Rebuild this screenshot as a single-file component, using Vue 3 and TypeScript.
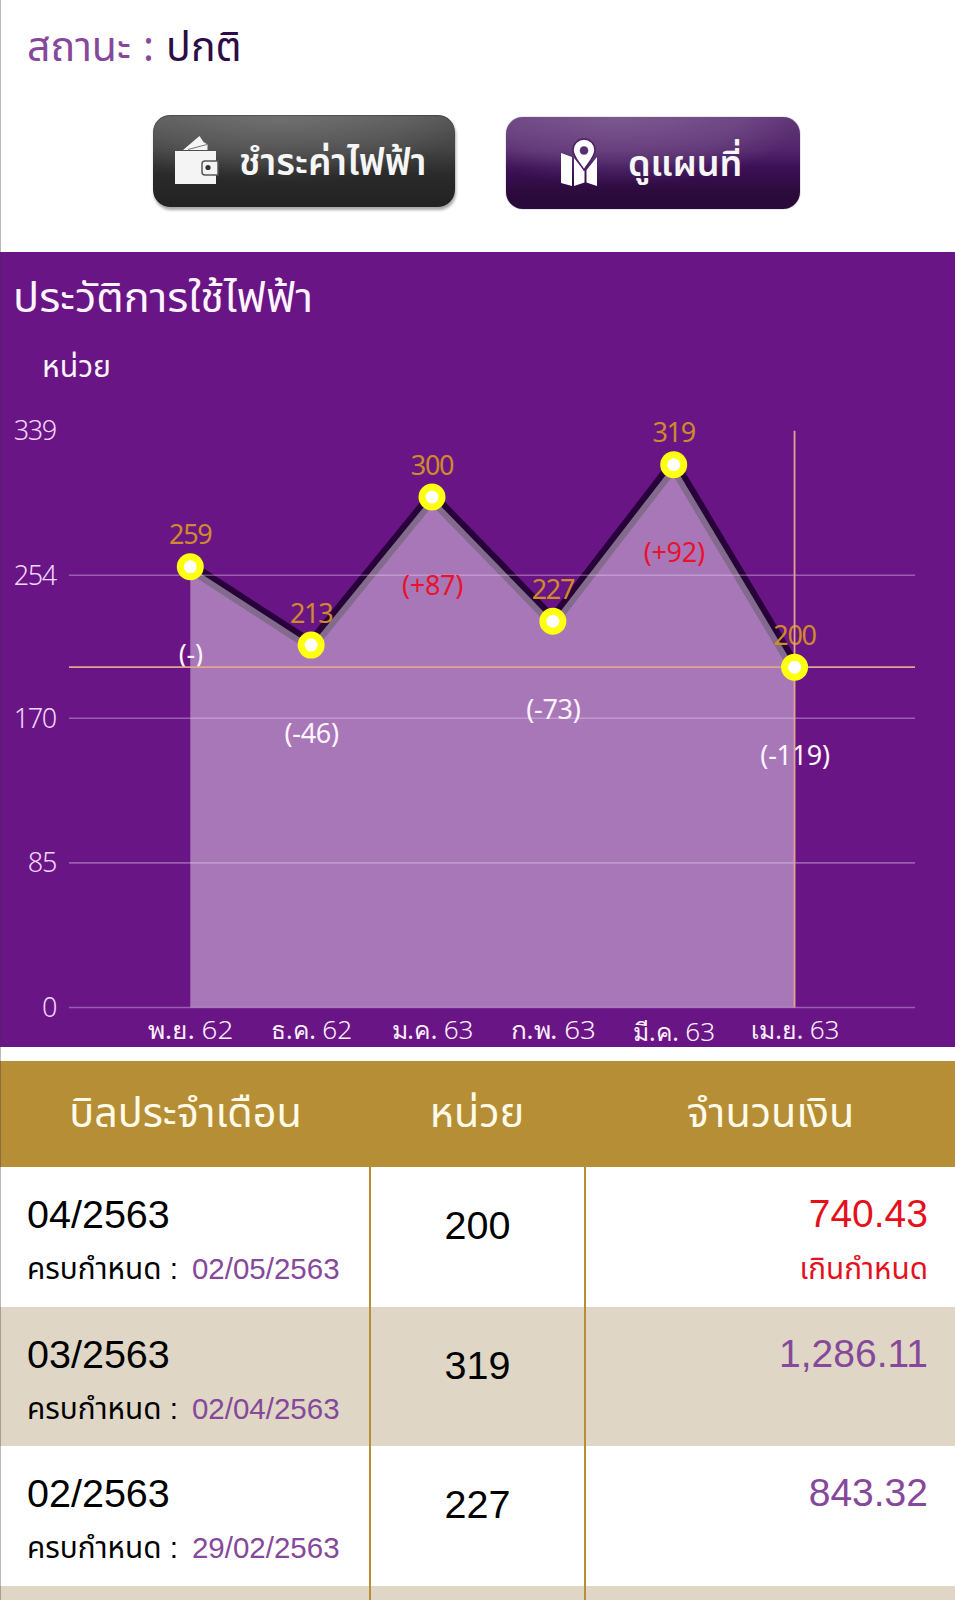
<script setup lang="ts">
interface Point { month: string; year: string; units: number; delta: string; width: number }
interface Bill { month: string; due: string; units: number; amount: string; overdue: boolean }

const points: Point[] = [
  { month: 'พ.ย.', year: '62', units: 259, delta: '(-)', width: 84 },
  { month: 'ธ.ค.', year: '62', units: 213, delta: '(-46)', width: 80 },
  { month: 'ม.ค.', year: '63', units: 300, delta: '(+87)', width: 81 },
  { month: 'ก.พ.', year: '63', units: 227, delta: '(-73)', width: 84 },
  { month: 'มี.ค.', year: '63', units: 319, delta: '(+92)', width: 81 },
  { month: 'เม.ย.', year: '63', units: 200, delta: '(-119)', width: 88 },
]
const ticks = [339, 254, 170, 85, 0]

const baseY = 755.5
const scale = 1.7015
const px = (i: number) => 190.3 + i * 120.85
const py = (v: number) => baseY - v * scale
const linePoints = points.map((p, i) => `${px(i)},${py(p.units)}`).join(' ')
const areaPoints = `${px(0)},${baseY} ${linePoints} ${px(5)},${baseY}`

const bills: Bill[] = [
  { month: '04/2563', due: '02/05/2563', units: 200, amount: '740.43', overdue: true },
  { month: '03/2563', due: '02/04/2563', units: 319, amount: '1,286.11', overdue: false },
  { month: '02/2563', due: '29/02/2563', units: 227, amount: '843.32', overdue: false },
]
</script>

<template>
  <main class="page">
    <section class="top">
      <p class="status"><span>สถานะ :</span> ปกติ</p>
      <div class="actions">
        <button class="btn pay">
          <svg class="wallet" viewBox="0 0 44 49">
            <path d="M8 14 24.500 0 28.500 6 32.500 8.500V14Z" fill="#f4f4f4" />
            <path d="M13 13.500 32 8.500" stroke="#777" stroke-width="1" />
            <path d="M0 15h41v33H0z" fill="#f4f4f4" />
            <path d="M43 25H30q-3 0-3 3v8q0 3 3 3h13z" fill="#f4f4f4" stroke="#555" stroke-width="1.500" />
            <circle cx="33" cy="31.500" r="2.600" fill="#333" />
          </svg>
          <span>ชำระค่าไฟฟ้า</span>
        </button>
        <button class="btn map">
          <svg class="pin" viewBox="0 0 38 50">
            <path d="M1 15 12 19V48L1 45Z M14 20 24.500 33V44.500L14 48Z M26.500 32 37 19V48L26.500 44.500Z" fill="#fff" />
            <path d="M24 1a11 11 0 0 0-11 11c0 7 7 13 11 20 4-7 11-13 11-20A11 11 0 0 0 24 1Z" fill="#fff" stroke="#4b1f62" stroke-width="1.500" />
            <circle cx="24" cy="12.500" r="4.300" fill="#57306f" />
          </svg>
          <span>ดูแผนที่</span>
        </button>
      </div>
    </section>

    <section class="history">
      <svg class="chart" viewBox="0 0 955 795">
        <text class="thai title" x="13" y="60" textLength="300" lengthAdjust="spacingAndGlyphs">ประวัติการใช้ไฟฟ้า</text>
        <text class="thai unit" x="42" y="125" textLength="69" lengthAdjust="spacingAndGlyphs">หน่วย</text>

        <polyline class="line" :points="linePoints" />
        <polygon class="area" :points="areaPoints" />
        <line v-for="t in ticks.slice(1)" :key="t" class="grid" x1="69" x2="915" :y1="py(t)" :y2="py(t)" />
        <text v-for="t in ticks" :key="`t${t}`" class="tick" x="56" :y="py(t) + 9.500">{{ t }}</text>

        <g v-for="(p, i) in points" :key="p.month">
          <text class="value" :x="px(i)" :y="py(p.units) - 22.500">{{ p.units }}</text>
          <text class="delta" :class="{ up: p.delta.includes('+') }" :x="px(i) + 0.5" :y="py(p.units) + 97.500">{{ p.delta }}</text>
          <text
            class="month"
            :x="px(i) + 0.5"
            :y="p.month.startsWith('มี') ? 788.500 : 787"
            :textLength="p.width + 1"
            lengthAdjust="spacingAndGlyphs"
          >{{ p.month }} <tspan class="year">{{ p.year }}</tspan></text>
        </g>

        <line class="cross" x1="69" x2="915" :y1="py(200)" :y2="py(200)" />
        <line class="cross" :x1="px(5)" :x2="px(5)" :y1="py(339)" :y2="baseY" />
        <g v-for="(p, i) in points" :key="`d${i}`">
          <circle :cx="px(i)" :cy="py(p.units)" r="13.500" fill="#ffff10" />
          <circle :cx="px(i)" :cy="py(p.units)" r="6.500" fill="#fff" />
        </g>
      </svg>
    </section>

    <section class="bills">
      <header class="row head">
        <div class="cell"><span class="h1">บิลประจำเดือน</span></div>
        <div class="cell"><span class="h2">หน่วย</span></div>
        <div class="cell"><span class="h3">จำนวนเงิน</span></div>
      </header>
      <div v-for="b in bills" :key="b.month" class="row bill">
        <div class="cell period">
          <span class="big">{{ b.month }}</span>
          <span class="small">ครบกำหนด :<em>{{ b.due }}</em></span>
        </div>
        <div class="cell units">{{ b.units }}</div>
        <div class="cell amount" :class="{ overdue: b.overdue }">
          <span class="big">{{ b.amount }}</span>
          <span v-if="b.overdue" class="small">เกินกำหนด</span>
        </div>
      </div>
      <div class="row bill">
        <div class="cell"></div>
        <div class="cell"></div>
        <div class="cell"></div>
      </div>
    </section>
  </main>
</template>

<style>
body {
  overflow: hidden;
}
</style>

<style scoped>
.page {
  position: relative;
  width: 955px;
  height: 1600px;
  overflow: hidden;
  background: #fff;
  font-family: "Liberation Sans", "Noto Sans Thai", sans-serif;
}
.page::after {
  content: "";
  position: absolute;
  inset: 0 auto 0 0;
  width: 1px;
  background: rgba(60, 50, 70, 0.35);
}
.top {
  height: 252px;
}
.status {
  margin: 0;
  padding: 18px 0 0 27px;
  height: 99px;
  box-sizing: border-box;
  line-height: 60px;
  font-family: "Noto Sans Thai", sans-serif;
  font-size: 41px;
  word-spacing: 1.5px;
  color: #2c0d45;
}
.status span {
  color: #86489a;
}
.actions {
  display: flex;
  padding: 16px 0 0 153px;
  gap: 51px;
}
.btn {
  display: flex;
  align-items: flex-start;
  box-sizing: border-box;
  height: 92px;
  padding: 0;
  border: 0;
  border-radius: 17px;
  color: #f6f6f6;
  font-family: "Noto Sans Thai", sans-serif;
  font-weight: 600;
  white-space: nowrap;
}
.btn svg {
  flex: none;
}
.pay {
  width: 302px;
  padding: 21px 0 0 22px;
  gap: 20px;
  font-size: 37px;
  line-height: 57px;
  background:
    radial-gradient(ellipse 62% 75% at 42% 0, rgba(255, 255, 255, 0.16), rgba(255, 255, 255, 0.08) 65%, transparent 100%),
    linear-gradient(#575757, #454545 35%, #2a2a2a 65%, #222);
  box-shadow: 1px 3px 3px rgba(0, 0, 0, 0.35), inset 0 1px 1px rgba(0, 0, 0, 0.25);
}
.map {
  width: 294px;
  margin-top: 1.5px;
  padding: 21px 0 0 54px;
  gap: 30px;
  font-size: 36px;
  line-height: 54px;
  background:
    radial-gradient(ellipse 62% 75% at 38% 0, rgba(255, 255, 255, 0.18), rgba(255, 255, 255, 0.1) 65%, transparent 100%),
    linear-gradient(#603577, #53266c 35%, #3c1057 55%, #2a0a3a 85%);
  box-shadow: 0 0 1px #40204d;
}
.wallet {
  width: 44px;
  height: 49px;
}
.pin {
  width: 38px;
  height: 50px;
}
.history {
  height: 795px;
  background: #6a1585;
}
.chart {
  display: block;
  width: 955px;
  height: 795px;
  overflow: visible;
  font-family: "Noto Sans", sans-serif;
  font-size: 27px;
}
.thai {
  font-family: "Noto Sans Thai", sans-serif;
  fill: #fff4ff;
}
.title {
  font-size: 41px;
}
.unit {
  font-size: 30px;
}
.line {
  fill: none;
  stroke: #28003a;
  stroke-width: 12;
}
.area {
  fill: rgba(255, 255, 255, 0.42);
}
.grid {
  stroke: rgba(235, 210, 245, 0.38);
  stroke-width: 1.6;
}
.cross {
  stroke: #e0a590;
  stroke-width: 1.8;
}
.tick {
  font-weight: 350;
  letter-spacing: -1.3px;
  text-anchor: end;
  fill: #f2d8fb;
}
.value,
.delta,
.month {
  text-anchor: middle;
}
.value {
  letter-spacing: -1.3px;
  fill: #cf8a2c;
}
.delta {
  fill: #fff4ff;
  letter-spacing: -0.3px;
}
.delta.up {
  fill: #e8122c;
}
.month {
  font-size: 25px;
  fill: #fdf0ff;
}
.year {
  font-size: 26.5px;
  font-weight: 300;
}
.bills {
  margin-top: 14px;
}
.row {
  display: grid;
  grid-template-columns: 371px 215px 369px;
}
.head {
  height: 106px;
  background: #b68e36;
  color: #fffbe8;
  font-family: "Noto Sans Thai", sans-serif;
  font-size: 41.3px;
  line-height: 107px;
  text-align: center;
}
.h2 {
  margin-right: 3px;
}
.bill {
  height: 139.7px;
  background: #fff;
}
.bill:nth-child(odd) {
  background: #dfd6c5;
}
.bill .cell {
  box-sizing: border-box;
  border-right: 2.5px solid #b68e36;
}
.bill .cell:last-child {
  border-right: 0;
}
.period,
.amount {
  display: flex;
  flex-direction: column;
  padding: 24px 27px 0;
}
.big {
  font-size: 39.5px;
  line-height: 46px;
}
.small {
  margin-top: 9px;
  font-size: 29.7px;
  line-height: 46px;
  white-space: nowrap;
}
.small em {
  margin-left: 14px;
  font-style: normal;
  font-size: 29.5px;
  color: #86489a;
}
.units {
  padding-top: 35px;
  font-size: 39.5px;
  line-height: 46px;
  text-align: center;
}
.amount {
  align-items: flex-end;
  color: #86489a;
}
.amount .big {
  font-size: 39px;
}
.amount.overdue {
  color: #e6101c;
}
</style>
